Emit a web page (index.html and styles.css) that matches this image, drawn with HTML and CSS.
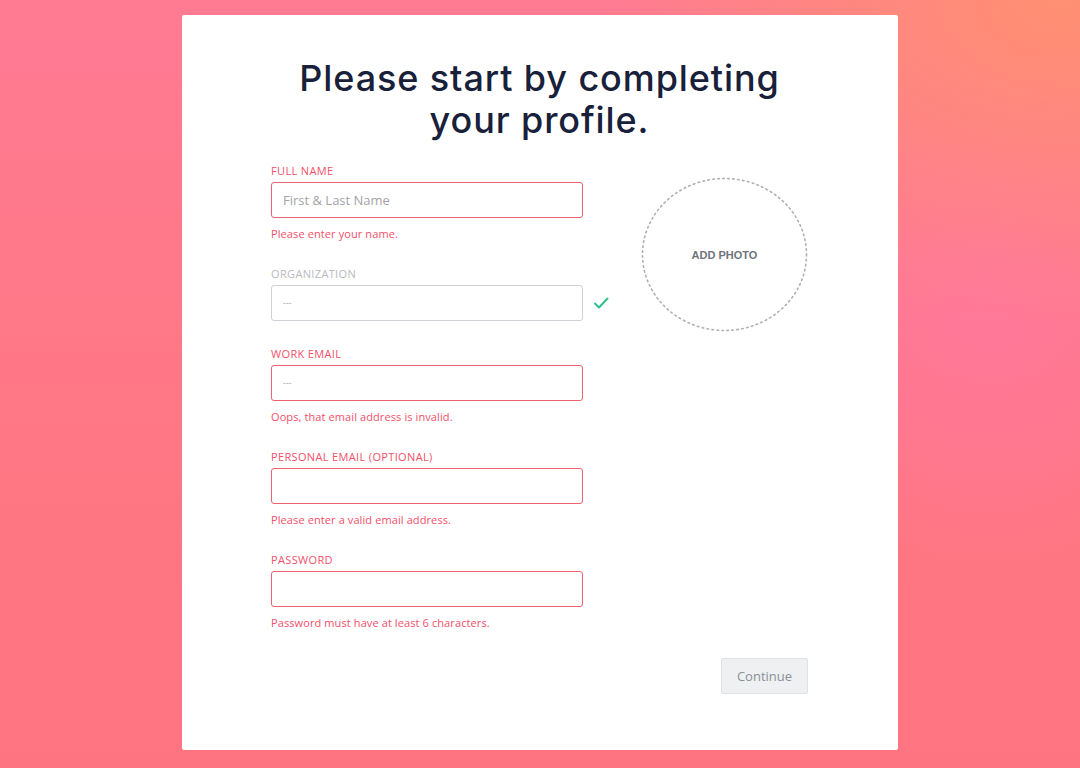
FILE: index.html
```html
<!DOCTYPE html>
<html lang="en">
<head>
<meta charset="utf-8">
<title>Complete your profile</title>
<link rel="stylesheet" href="styles.css">
</head>
<body>
<main class="card">
  <h1 class="title">Please start by completing<br>your profile.</h1>
  <div class="content">
    <form class="form">
      <div class="field invalid">
        <label class="label">Full Name</label>
        <div class="input-row">
          <div class="input placeholder">First &amp; Last Name</div>
        </div>
        <p class="error">Please enter your name.</p>
      </div>
      <div class="field valid">
        <label class="label">Organization</label>
        <div class="input-row">
          <div class="input dots">---</div>
          <svg class="check" width="16" height="14" viewBox="0 0 16 14"><path d="M2 7.5 L6 11.5 L14.5 2.5" fill="none" stroke="#2fc18c" stroke-width="2" stroke-linecap="round" stroke-linejoin="round"/></svg>
        </div>
      </div>
      <div class="field invalid">
        <label class="label">Work Email</label>
        <div class="input-row">
          <div class="input dots">---</div>
        </div>
        <p class="error">Oops, that email address is invalid.</p>
      </div>
      <div class="field invalid">
        <label class="label">Personal Email (Optional)</label>
        <div class="input-row">
          <div class="input"></div>
        </div>
        <p class="error">Please enter a valid email address.</p>
      </div>
      <div class="field invalid">
        <label class="label">Password</label>
        <div class="input-row">
          <div class="input"></div>
        </div>
        <p class="error">Password must have at least 6 characters.</p>
      </div>
    </form>
    <div class="photo">
      <svg class="ring" width="167" height="155" viewBox="0 0 167 155"><ellipse cx="83.5" cy="77.5" rx="82" ry="76" fill="none" stroke="#aeb0b5" stroke-width="1.6" stroke-dasharray="1.6 3.4" stroke-linecap="round"/></svg>
      <span>ADD PHOTO</span>
    </div>
  </div>
  <div class="actions">
    <button class="btn" type="button">Continue</button>
  </div>
</main>
</body>
</html>
```

FILE: styles.css
```css
* { box-sizing: border-box; }
html, body { margin: 0; padding: 0; }
body {
  width: 1080px;
  height: 768px;
  overflow: hidden;
  font-family: "Open Sans", "Liberation Sans", sans-serif;
  background:
    radial-gradient(ellipse 460px 330px at 1060px 0px, rgba(255,145,112,0.95), rgba(255,140,115,0) 100%),
    radial-gradient(ellipse 240px 300px at 990px 270px, rgba(255,120,160,0.85), rgba(255,120,160,0) 100%),
    linear-gradient(180deg, #ff7b92 0%, #ff7784 60%, #ff7480 100%);
  padding-top: 15px;
}
.card {
  width: 716px;
  height: 735px;
  margin: 0 0 0 182px;
  background: #fff;
  border-radius: 2px;
  padding: 42px 90px 0 89px;
  display: flex;
  flex-direction: column;
}
.title {
  margin: 0;
  text-align: center;
  font-family: "Inter", "Liberation Sans", sans-serif;
  font-weight: 500;
  font-size: 36px;
  line-height: 42px;
  color: #18203a;
  letter-spacing: 0.9px;
}
.content {
  display: flex;
  margin-top: 23px;
}
.form {
  width: 340px;
  display: flex;
  flex-direction: column;
  gap: 26px;
}
.field { display: flex; flex-direction: column; }
.label {
  font-size: 11px;
  line-height: 14px;
  text-transform: uppercase;
  color: #f2506a;
  margin-bottom: 4px;
  letter-spacing: 0.35px;
}
.valid .label { color: #b9b9be; }
.input-row { display: flex; align-items: center; }
.input {
  width: 312px;
  height: 36px;
  border: 1px solid #f0606f;
  border-radius: 3px;
  padding: 0 11px;
  font-size: 13px;
  line-height: 34px;
  color: #999;
  background: #fff;
}
.valid .input { border-color: #cfd1d6; }
.placeholder { color: #a3a3a8; }
.dots { color: #a6a6a6; font-size: 9px; }
.check { margin-left: 10px; }
.error {
  margin: 9px 0 0;
  font-size: 11px;
  line-height: 14px;
  color: #f2506a;
  letter-spacing: 0.1px;
}
.photo {
  position: relative;
  margin-left: 30px;
  margin-top: 13px;
  width: 167px;
  height: 155px;
  display: flex;
  align-items: center;
  justify-content: center;
  font-size: 11px;
  font-weight: 600;
  color: #6f747c;
  font-family: "Liberation Sans", sans-serif;
}
.ring {
  position: absolute;
  left: 0;
  top: 0;
}
.actions {
  display: flex;
  justify-content: flex-end;
  margin-top: 28px;
}
.btn {
  width: 87px;
  height: 36px;
  background: #eef0f2;
  border: 1px solid #dfe2e6;
  border-radius: 2px;
  color: #8a9099;
  font-family: "Open Sans", "Liberation Sans", sans-serif;
  font-size: 13px;
  padding: 0;
}
```
